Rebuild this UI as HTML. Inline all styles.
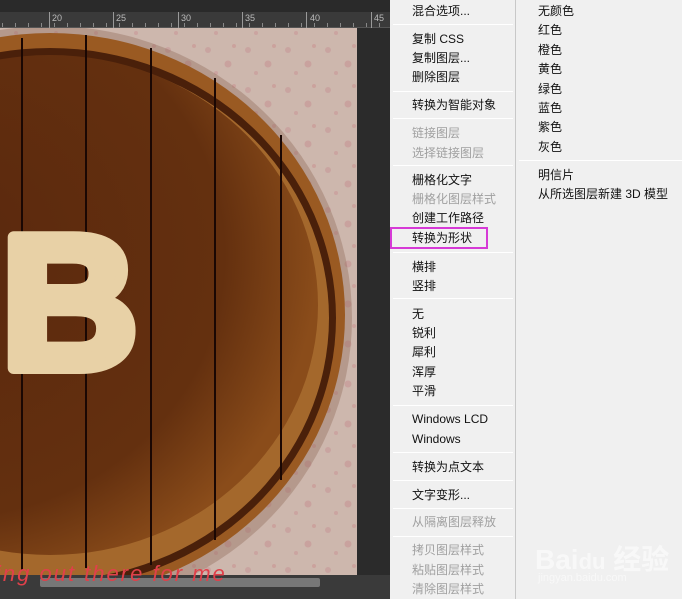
<!DOCTYPE html>
<html><head><meta charset="utf-8"><style>
*{margin:0;padding:0;box-sizing:border-box}
body{width:682px;height:599px;overflow:hidden;background:#2b2b2b;position:relative;font-family:"Liberation Sans","Noto Sans CJK SC",sans-serif}
#topbar{position:absolute;left:0;top:0;width:390px;height:12px;background:#2a2a2a}
#ruler{position:absolute;left:0;top:12px;width:390px;height:16px;background:#3a3a3a;border-bottom:1px solid #555}
#ruler span{position:absolute;top:1px;font-size:9px;color:#bbb}
#canvas{position:absolute;left:0;top:28px;width:357px;height:547px;overflow:hidden;background:#c4a9a0}
#menu{position:absolute;left:390px;top:0;width:292px;height:599px;background:#f0f0f0}
.it{position:absolute;font-size:12px;color:#111;white-space:nowrap;line-height:14px}
.g{color:#a0a0a0}
.sep{position:absolute;height:1px;background:#c8c8c8;border-bottom:1px solid #fff}
#vline{position:absolute;left:125px;top:0;width:1px;height:599px;background:#c8c8c8}
#scroll{position:absolute;left:0;top:575px;width:390px;height:24px;background:#3a3a3a}
</style></head><body>
<div id="topbar"></div>
<div id="ruler">
<span style="left:52px">20</span><span style="left:116px">25</span><span style="left:181px">30</span><span style="left:245px">35</span><span style="left:310px">40</span><span style="left:374px">45</span>
<svg width="390" height="16" style="position:absolute;left:0;top:0"><g stroke="#999" stroke-width="1">
<line x1="49.5" y1="0" x2="49.5" y2="16"/><line x1="113.5" y1="0" x2="113.5" y2="16"/><line x1="178.5" y1="0" x2="178.5" y2="16"/><line x1="242.5" y1="0" x2="242.5" y2="16"/><line x1="306.5" y1="0" x2="306.5" y2="16"/><line x1="371.5" y1="0" x2="371.5" y2="16"/></g>
<g stroke="#888" stroke-dasharray="1 12" stroke-dashoffset="-2"><line x1="0" y1="13" x2="390" y2="13" stroke-width="4"/></g></svg>
</div>
<div id="canvas">
<svg width="357" height="547" viewBox="0 28 357 547">
<defs>
<pattern id="fl" width="40" height="40" patternUnits="userSpaceOnUse">
<rect width="40" height="40" fill="#cdb7ad"/>
<circle cx="8" cy="10" r="3" fill="#c48f90" opacity=".45"/><circle cx="28" cy="24" r="3.5" fill="#c48286" opacity=".4"/><circle cx="16" cy="33" r="2" fill="#c98f90" opacity=".45"/><circle cx="34" cy="6" r="2" fill="#c78a8a" opacity=".45"/>
</pattern>
<radialGradient id="wood" cx="0.3" cy="0.4" r="0.7"><stop offset="0" stop-color="#5a280e"/><stop offset="0.75" stop-color="#64300f"/><stop offset="1" stop-color="#8a4c1a"/></radialGradient>
</defs>
<rect x="0" y="28" width="357" height="547" fill="url(#fl)"/>
<ellipse cx="50" cy="318" rx="302" ry="292" fill="#8a6050" opacity=".35"/>
<ellipse cx="50" cy="315" rx="295" ry="282" fill="#9a5a22"/>
<ellipse cx="50" cy="318" rx="286" ry="270" fill="#4a200a"/>
<ellipse cx="50" cy="318" rx="279" ry="262" fill="#a4682c"/>
<ellipse cx="50" cy="305" rx="268" ry="250" fill="url(#wood)"/>
<g stroke="#1a0703" stroke-width="2">
<line x1="22" y1="38" x2="22" y2="570"/><line x1="86" y1="35" x2="86" y2="568"/><line x1="151" y1="48" x2="151" y2="565"/><line x1="215" y1="78" x2="215" y2="540"/><line x1="281" y1="135" x2="281" y2="480"/></g>
<text x="1" y="368" font-family="Liberation Sans" font-weight="bold" font-size="190" fill="#e8d1a6" stroke="#e8d1a6" stroke-width="12" stroke-linejoin="round">B</text>
</svg>
</div>
<div id="scroll"><div style="position:absolute;left:40px;top:3px;width:280px;height:9px;background:#777;border-radius:2px"></div></div>
<div style="position:absolute;left:-4px;top:561px;font-family:'Liberation Sans',sans-serif;font-style:italic;font-size:22px;letter-spacing:2px;color:#e0404a;white-space:nowrap">ing out there for me</div>
<div id="menu">
<div id="vline"></div>
<div class="it" style="left:22px;top:4px">混合选项...</div>
<div class="sep" style="left:3px;top:24px;width:120px"></div>
<div class="it" style="left:22px;top:32px">复制 CSS</div>
<div class="it" style="left:22px;top:51px">复制图层...</div>
<div class="it" style="left:22px;top:70px">删除图层</div>
<div class="sep" style="left:3px;top:91px;width:120px"></div>
<div class="it" style="left:22px;top:98px">转换为智能对象</div>
<div class="sep" style="left:3px;top:118px;width:120px"></div>
<div class="it g" style="left:22px;top:126px">链接图层</div>
<div class="it g" style="left:22px;top:146px">选择链接图层</div>
<div class="sep" style="left:3px;top:165px;width:120px"></div>
<div class="it" style="left:22px;top:173px">栅格化文字</div>
<div class="it g" style="left:22px;top:192px">栅格化图层样式</div>
<div class="it" style="left:22px;top:211px">创建工作路径</div>
<div style="position:absolute;left:0;top:227px;width:98px;height:22px;border:2px solid #d63ad6"></div>
<div class="it" style="left:22px;top:231px">转换为形状</div>
<div class="sep" style="left:3px;top:252px;width:120px"></div>
<div class="it" style="left:22px;top:260px">横排</div>
<div class="it" style="left:22px;top:279px">竖排</div>
<div class="sep" style="left:3px;top:298px;width:120px"></div>
<div class="it" style="left:22px;top:307px">无</div>
<div class="it" style="left:22px;top:326px">锐利</div>
<div class="it" style="left:22px;top:345px">犀利</div>
<div class="it" style="left:22px;top:365px">浑厚</div>
<div class="it" style="left:22px;top:384px">平滑</div>
<div class="sep" style="left:3px;top:405px;width:120px"></div>
<div class="it" style="left:22px;top:412px">Windows LCD</div>
<div class="it" style="left:22px;top:432px">Windows</div>
<div class="sep" style="left:3px;top:452px;width:120px"></div>
<div class="it" style="left:22px;top:460px">转换为点文本</div>
<div class="sep" style="left:3px;top:480px;width:120px"></div>
<div class="it" style="left:22px;top:488px">文字变形...</div>
<div class="sep" style="left:3px;top:508px;width:120px"></div>
<div class="it g" style="left:22px;top:515px">从隔离图层释放</div>
<div class="sep" style="left:3px;top:536px;width:120px"></div>
<div class="it g" style="left:22px;top:543px">拷贝图层样式</div>
<div class="it g" style="left:22px;top:563px">粘贴图层样式</div>
<div class="it g" style="left:22px;top:582px">清除图层样式</div>
<div class="it" style="left:148px;top:4px">无颜色</div>
<div class="it" style="left:148px;top:23px">红色</div>
<div class="it" style="left:148px;top:43px">橙色</div>
<div class="it" style="left:148px;top:62px">黄色</div>
<div class="it" style="left:148px;top:82px">绿色</div>
<div class="it" style="left:148px;top:101px">蓝色</div>
<div class="it" style="left:148px;top:120px">紫色</div>
<div class="it" style="left:148px;top:140px">灰色</div>
<div class="sep" style="left:129px;top:160px;width:163px"></div>
<div class="it" style="left:148px;top:168px">明信片</div>
<div class="it" style="left:148px;top:187px">从所选图层新建 3D 模型</div>
<div style="position:absolute;left:145px;top:538px;font-size:28px;font-weight:bold;color:#fff;opacity:.55;white-space:nowrap">Bai<span style="font-size:22px">du</span> 经验</div>
<div style="position:absolute;left:148px;top:572px;font-size:11px;color:#fff;opacity:.55">jingyan.baidu.com</div>
</div>
</body></html>
